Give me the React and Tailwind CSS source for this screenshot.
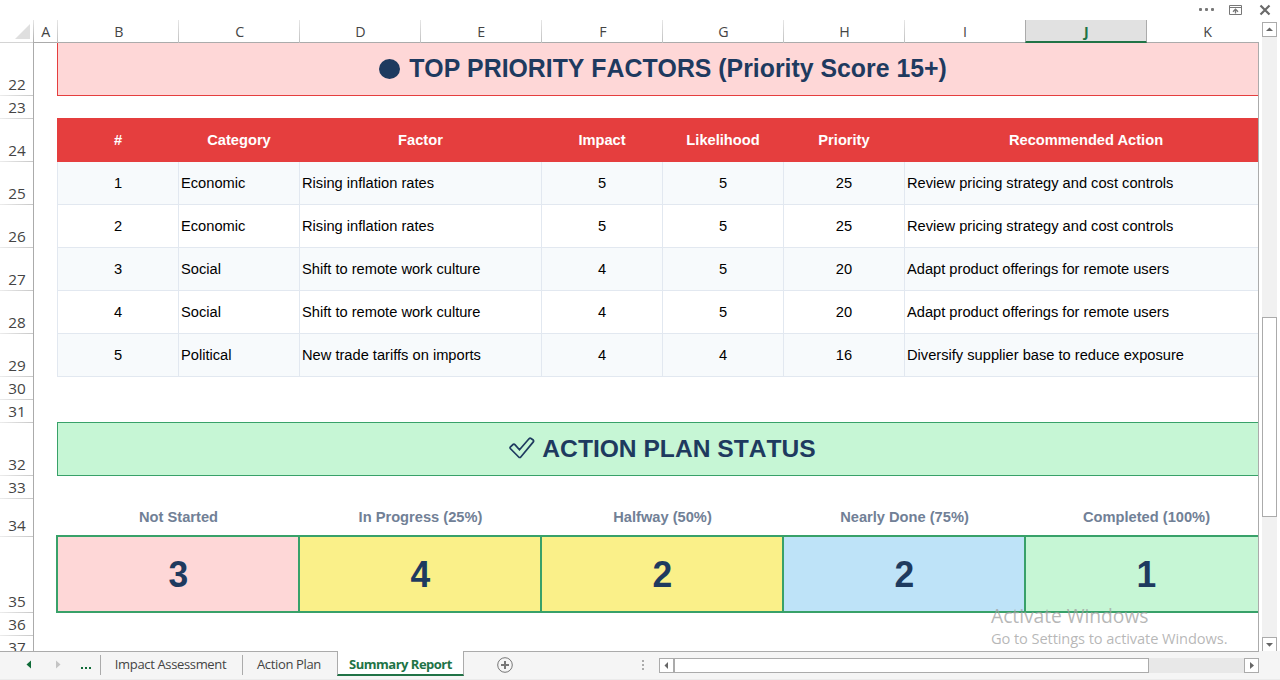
import React from "react";

const columns = ["B", "C", "D", "E", "F", "G", "H", "I", "J", "K"];

const rowHeaders = [
  [22, "h-[53px]"],
  [23, "h-[23px]"],
  [24, "h-[43px]"],
  [25, "h-[43px]"],
  [26, "h-[43px]"],
  [27, "h-[43px]"],
  [28, "h-[43px]"],
  [29, "h-[43px]"],
  [30, "h-[23px]"],
  [31, "h-[23px]"],
  [32, "h-[53px]"],
  [33, "h-[23px]"],
  [34, "h-[38px]"],
  [35, "h-[76px]"],
  [36, "h-[23px]"],
  [37, "h-[23px]"],
];

const factors = [
  ["1", "Economic", "Rising inflation rates", "5", "5", "25", "Review pricing strategy and cost controls"],
  ["2", "Economic", "Rising inflation rates", "5", "5", "25", "Review pricing strategy and cost controls"],
  ["3", "Social", "Shift to remote work culture", "4", "5", "20", "Adapt product offerings for remote users"],
  ["4", "Social", "Shift to remote work culture", "4", "5", "20", "Adapt product offerings for remote users"],
  ["5", "Political", "New trade tariffs on imports", "4", "4", "16", "Diversify supplier base to reduce exposure"],
];

const factorHeadings = ["#", "Category", "Factor", "Impact", "Likelihood", "Priority", "Recommended Action"];
const widths = ["w-[121px]", "w-[121px]", "w-[242px]", "w-[121px]", "w-[121px]", "w-[121px]", "w-[363px]"];
const leftAligned = [false, true, true, false, false, false, true];

const statuses = [
  ["Not Started", "3", "bg-[#fed7d7]"],
  ["In Progress (25%)", "4", "bg-[#faf089]"],
  ["Halfway (50%)", "2", "bg-[#faf089]"],
  ["Nearly Done (75%)", "2", "bg-[#bee3f8]"],
  ["Completed (100%)", "1", "bg-[#c6f6d5]"],
];

function WindowControls() {
  return (
    <div className="flex h-5 shrink-0 justify-end pr-2 pt-1">
      <svg width="74" height="12" viewBox="0 0 74 12" fill="none">
        <g fill="#777">
          <rect x="1" y="4" width="3" height="3" rx="1" />
          <rect x="7" y="4" width="3" height="3" rx="1" />
          <rect x="13" y="4" width="3" height="3" rx="1" />
        </g>
        <g stroke="#777">
          <path d="M31.5 1.5h12v9h-12zM31.5 3.5h12" />
          <path d="M37.5 9.5V5.5M35 7.7l2.5-2.5L40 7.7" strokeWidth="1.3" />
        </g>
        <path d="M62.5 1.5l9 9M71.5 1.5l-9 9" stroke="#6a6a6a" strokeWidth="2.2" />
      </svg>
    </div>
  );
}

function ColumnHeaders() {
  return (
    <div className="flex h-[23px] w-[1259px] shrink-0 overflow-hidden font-['Open_Sans','Noto_Sans',sans-serif] text-[15px] leading-[23px] text-[#444]">
      <div className="flex h-[23px] w-[33px] shrink-0 items-end justify-end border-b border-[#d4d4d4] pb-[3px] pr-[3px]">
        <svg width="15" height="15" viewBox="0 0 15 15">
          <path d="M15 0v15H0z" fill="#dfdfdf" />
        </svg>
      </div>
      <div className="h-[23px] w-px shrink-0 bg-linear-to-b from-[#e6e6e6] to-[#ababab]" />
      <div className="h-[23px] w-[23px] shrink-0 border-b border-[#ababab] text-center">
        <span className="inline-block scale-x-95">A</span>
      </div>
      <div className="h-[23px] w-px shrink-0 bg-linear-to-b from-[#e6e6e6] to-[#c0c0c0]" />
      {columns.map((name) =>
        name === "J" ? (
          <div
            key={name}
            className="-ml-px h-[23px] w-[122px] shrink-0 border-x border-b-2 border-x-[#ababab] border-b-[#217346] bg-[#e1e1e1] text-center font-bold text-[#217346]"
          >
            <span className="inline-block scale-x-95">J</span>
          </div>
        ) : (
          <div key={name} className="flex h-[23px] w-[121px] shrink-0">
            <div className="h-[23px] w-[120px] border-b border-[#ababab] pl-px text-center">
              <span className="inline-block scale-x-95">{name}</span>
            </div>
            <div className="h-[23px] w-px bg-linear-to-b from-[#e6e6e6] to-[#c0c0c0]" />
          </div>
        )
      )}
    </div>
  );
}

function RowHeaders() {
  return (
    <div className="w-[34px] shrink-0 overflow-hidden border-r border-[#ababab] font-['Open_Sans','Noto_Sans',sans-serif] text-[15.3px] text-[#444]">
      {rowHeaders.map(([n, height]) => (
        <div key={n} className={`flex flex-col justify-end ${height}`}>
          <div className="h-[22px] pl-px text-center leading-[23px] tracking-[-0.1px]">{n}</div>
          <div className="h-px shrink-0 bg-linear-to-r from-[#ececec] to-[#c8c8c8]" />
        </div>
      ))}
    </div>
  );
}

function FactorTable() {
  return (
    <div className="ml-[23px] w-[1211px] text-[14.667px] leading-[17px]">
      <div className="flex h-11 items-center bg-[#e53e3e] pl-[0.5px] font-bold text-white">
        {factorHeadings.map((h, i) => (
          <div key={h} className={`shrink-0 text-center ${widths[i]}`}>
            {h}
          </div>
        ))}
      </div>
      {factors.map((row, r) => (
        <div key={r} className={`flex h-[43px] border-l border-[#e2e8f0] text-black ${r % 2 ? "bg-white" : "bg-[#f7fafc]"}`}>
          {row.map((value, i) => (
            <div
              key={i}
              className={`flex shrink-0 items-center border-b border-r border-[#e2e8f0] whitespace-nowrap ${widths[i]} ${
                leftAligned[i] ? "pl-[2px]" : "justify-center"
              }`}
            >
              {value}
            </div>
          ))}
        </div>
      ))}
    </div>
  );
}

function Sheet() {
  return (
    <div className="h-[608px] w-[1225px] shrink-0 overflow-hidden border-r border-[#ababab] bg-white font-['Liberation_Sans',Arial,sans-serif]">
      <div className="ml-[23px] flex h-[53px] w-[1211px] items-center justify-center border-b border-l border-[#e53e3e] bg-[#fed7d7] text-[24.85px] font-bold text-[#1e3a5f] [font-kerning:none]">
        <div className="mr-[9px] mb-px h-[20px] w-[21px] rounded-[50%] bg-[#1e3a5f]" />
        <span className="whitespace-nowrap">TOP PRIORITY FACTORS (Priority Score 15+)</span>
      </div>
      <div className="h-[22px]" />
      <FactorTable />
      <div className="h-[45px]" />
      <div className="ml-[23px] flex h-[54px] w-[1211px] items-center justify-center border border-[#38a169] bg-[#c6f6d5] text-[24.6px] font-bold text-[#1e3a5f] [font-kerning:none]">
        <svg className="mr-[7px] mb-[3px]" width="26" height="22" viewBox="0 0 26 22" fill="none">
          <path
            d="M1.2 10.2 4.3 7.3Q5.2 6.8 5.9 7.6L10.5 12.8 20 1.8Q21 .8 22 1.5L24.2 3Q25 3.9 24.3 4.9L11.4 20.5 10.2 20.5 1.3 11.5Q.8 10.8 1.2 10.2Z"
            stroke="#1e3a5f"
            strokeWidth="1.7"
          />
        </svg>
        <span className="whitespace-nowrap">ACTION PLAN STATUS</span>
      </div>
      <div className="h-[23px]" />
      <div className="ml-[23.5px] flex h-9 w-[1210px] items-center text-[14.667px] font-bold text-[#718096]">
        {statuses.map(([label]) => (
          <div key={label} className="w-[242px] shrink-0 text-center">
            {label}
          </div>
        ))}
      </div>
      <div className="ml-[22px] flex h-[78px] w-[1212px] border-l-2 border-[#38a169]">
        {statuses.map(([label, count, color]) => (
          <div
            key={label}
            className={`flex w-[242px] shrink-0 items-center justify-center border-y-2 border-r-2 border-[#38a169] pt-[2px] pl-px text-[37.33px] font-bold leading-none text-[#1e3a5f] ${color}`}
          >
            <span className="inline-block scale-x-95">{count}</span>
          </div>
        ))}
      </div>
    </div>
  );
}

function ScrollButton({ d }) {
  return (
    <div className="flex h-[15px] w-[15px] shrink-0 items-center justify-center border border-[#ababab] bg-white">
      <svg width="13" height="13" viewBox="0 0 13 13">
        <path d={d} fill="#666" />
      </svg>
    </div>
  );
}

function VerticalScrollbar() {
  return (
    <div className="ml-[3px] mt-[2px] flex h-[630px] w-[15px] flex-col bg-[#f1f1f1]">
      <ScrollButton d="M3 8h7L6.5 4.5z" />
      <div className="mt-[280px] h-[200px] w-[15px] border border-[#ababab] bg-white" />
      <div className="mt-auto">
        <ScrollButton d="M3 5h7L6.5 8.8z" />
      </div>
    </div>
  );
}

function TabBar() {
  return (
    <div className="flex h-[29px] shrink-0 border-b border-[#ebebeb] bg-[#f5f5f5] font-['Open_Sans','Noto_Sans',sans-serif] text-[13px] leading-[25px] text-[#444]">
      <div className="flex w-[337px] shrink-0 border-t border-[#ababab]">
        <svg className="mt-[8px] shrink-0" width="100" height="14" viewBox="0 0 100 14">
          <path d="M31 0.5v8l-4.5-4z" fill="#0f6b38" />
          <path d="M56 0.5v8l4.5-4z" fill="#c4c4c4" />
          <path d="M81 7h2v2h-2zM85 7h2v2h-2zM89 7h2v2h-2z" fill="#0f6b38" />
        </svg>
        <div className="mt-[3px] h-5 w-px shrink-0 bg-[#ababab]" />
        <div className="w-[141px] shrink-0 pr-[2px] text-center tracking-[-0.35px] whitespace-nowrap">Impact Assessment</div>
        <div className="mt-[3px] h-5 w-px shrink-0 bg-[#ababab]" />
        <div className="w-[93px] shrink-0 pr-px text-center tracking-[-0.35px] whitespace-nowrap">Action Plan</div>
      </div>
      <div className="h-[25px] w-[127px] shrink-0 border-x border-b-2 border-x-[#ababab] border-b-[#217346] bg-white text-center leading-[27px] font-bold tracking-[-0.5px] whitespace-nowrap text-[#217346]">
        Summary Report
      </div>
      <div className="flex w-[795px] shrink-0 border-t border-[#ababab]">
        <svg className="ml-[33px] mt-[5px] shrink-0" width="17" height="17" viewBox="0 0 17 17" fill="none">
          <circle cx="8" cy="8" r="7.3" stroke="#777" />
          <path d="M8 4v8M4 8h8" stroke="#777" strokeWidth="2" />
        </svg>
        <svg className="ml-[128px] mt-[8px] shrink-0" width="3" height="10" viewBox="0 0 3 10">
          <path d="M0 0h2v2H0zM0 4h2v2H0zM0 8h2v2H0z" fill="#ababab" />
        </svg>
        <div className="ml-[14px] mt-[6px] flex h-[15px] w-[600px] bg-[#e8e8e8]">
          <ScrollButton d="M8 3v7L4.5 6.5z" />
          <div className="h-[15px] w-[475px] border border-[#ababab] bg-white" />
          <div className="ml-auto">
            <ScrollButton d="M5 3v7l4-3.5z" />
          </div>
        </div>
      </div>
    </div>
  );
}

export default function App() {
  return (
    <div className="relative flex h-[680px] w-[1280px] flex-col overflow-hidden bg-white">
      <WindowControls />
      <div className="flex h-[631px] shrink-0">
        <div className="flex w-[1259px] shrink-0 flex-col">
          <ColumnHeaders />
          <div className="flex h-[608px]">
            <RowHeaders />
            <Sheet />
          </div>
        </div>
        <VerticalScrollbar />
      </div>
      <TabBar />
      <div className="pointer-events-none absolute left-[991px] top-[604px] font-['Open_Sans','Noto_Sans',sans-serif] whitespace-nowrap text-[#a0a0a0]/75">
        <div className="text-[19.3px] leading-6 tracking-[-0.05px]">Activate Windows</div>
        <div className="text-[14.65px] leading-[21px] tracking-[-0.1px]">Go to Settings to activate Windows.</div>
      </div>
    </div>
  );
}
